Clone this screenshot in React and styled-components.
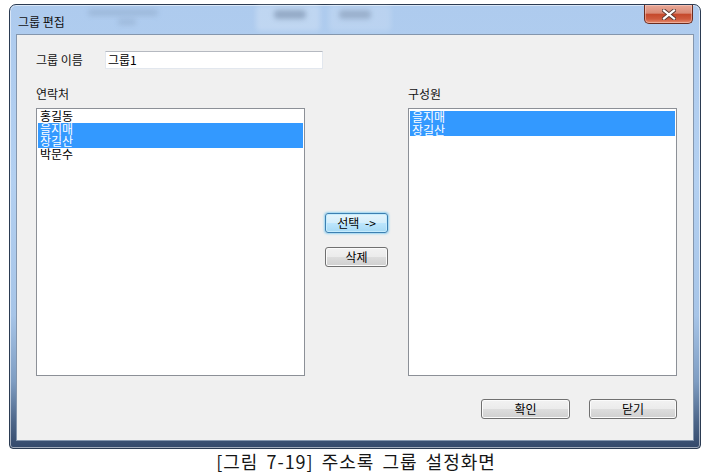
import React from "react";
import styled, { createGlobalStyle } from "styled-components";

const Global = createGlobalStyle`
  * { box-sizing: border-box; }
  html, body { margin: 0; padding: 0; background: #ffffff; }
  body { font-family: "Noto Sans CJK KR", "Noto Sans", sans-serif; }
`;

const Page = styled.div`
  width: 712px;
  height: 473px;
  background: #fff;
  display: flex;
  flex-direction: column;
  overflow: hidden;
`;

const Window = styled.div`
  margin: 4px 0 0 9px;
  width: 692px;
  height: 445px;
  border: 1px solid #2b3b52;
  border-radius: 7px 7px 4px 4px;
  background: linear-gradient(
    to bottom,
    #aecbee 0%,
    #b3d0f1 40%,
    #a7c5e8 70%,
    #7f9dc2 85%,
    #4d6689 94%,
    #34496a 100%
  );
  box-shadow: inset 0 0 0 1px rgba(255, 255, 255, 0.55);
  padding: 0 6px 7px;
  display: flex;
  flex-direction: column;
`;

const TitleBar = styled.div`
  position: relative;
  height: 29px;
  display: flex;
  justify-content: space-between;
  align-items: flex-start;
`;

const Blur = styled.span`
  position: absolute;
  border-radius: 4px;
  filter: blur(2.5px);
  background: ${(p) => p.$c || "rgba(60, 80, 110, 0.35)"};
  pointer-events: none;
`;

const TitleText = styled.div`
  position: relative;
  padding: 10px 0 0 2px;
  font-size: 12px;
  line-height: 14px;
  color: #111;
`;

const CloseBtn = styled.div`
  position: relative;
  margin-right: 1px;
  width: 49px;
  height: 19px;
  border: 1px solid #6b2c1f;
  border-top: none;
  border-radius: 0 0 5px 5px;
  background: linear-gradient(
    to bottom,
    #e9a897 0%,
    #d98a76 45%,
    #c5492c 52%,
    #cf5a3d 78%,
    #e58d70 100%
  );
  box-shadow: inset 0 0 0 1px rgba(255, 220, 210, 0.45);
  display: flex;
  align-items: center;
  justify-content: center;
`;

const Client = styled.div`
  flex: 1;
  background: #f0f0f0;
  border: 1px solid #8496ad;
  padding: 16px 16px 0 19px;
  display: flex;
  flex-direction: column;
`;

const NameRow = styled.div`
  display: flex;
  align-items: center;
  height: 18px;
`;

const Label = styled.div`
  font-size: 12px;
  line-height: 14px;
  color: #111;
  width: ${(p) => p.$w || "auto"};
  flex: none;
`;

const TextBox = styled.div`
  width: 218px;
  height: 18px;
  background: #fff;
  border: 1px solid #e2e7ee;
  border-top-color: #b5b9c0;
  font-size: 12px;
  line-height: 16px;
  padding-left: 2px;
  color: #000;
`;

const Lists = styled.div`
  margin-top: 18px;
  display: grid;
  grid-template-columns: 269px 63px 269px;
  column-gap: 20px;
  grid-template-rows: 14px 268px;
  row-gap: 7px;
`;

const ListBox = styled.div`
  background: #fff;
  border: 1px solid #8c9097;
  padding: ${(p) => p.$pt || 1}px 1px 0;
`;

const Item = styled.div`
  font-size: 12px;
  line-height: 12.5px;
  height: 12.5px;
  padding-left: 2px;
  white-space: nowrap;
  color: ${(p) => (p.$sel ? "#fff" : "#000")};
  background: ${(p) => (p.$sel ? "#3399ff" : "transparent")};
`;

const Middle = styled.div`
  padding-top: 105px;
  display: flex;
  flex-direction: column;
  gap: 14px;
`;

const Button = styled.div`
  width: ${(p) => p.$w || 63}px;
  height: 20px;
  border-radius: 3px;
  border: 1px solid ${(p) => (p.$focus ? "#3c7fb1" : "#707070")};
  background: ${(p) =>
    p.$focus
      ? "linear-gradient(to bottom, #e5f4fc 0%, #d4eefb 50%, #bde6fd 51%, #a6d9f4 100%)"
      : "linear-gradient(to bottom, #f2f2f2 0%, #ebebeb 50%, #dddddd 51%, #cfcfcf 100%)"};
  box-shadow: ${(p) =>
    p.$focus
      ? "inset 0 0 0 1px #c6ecfd, 0 0 2px 1px rgba(90, 190, 240, 0.6)"
      : "inset 0 0 0 1px #fbfbfb"};
  font-size: 12px;
  line-height: 18px;
  text-align: center;
  color: #000;
  word-spacing: ${(p) => p.$ws || 0}px;
`;

const Footer = styled.div`
  margin-top: 23px;
  display: flex;
  justify-content: flex-end;
  gap: 19px;
`;

const Caption = styled.div`
  height: 24px;
  text-align: center;
  font-size: 18px;
  line-height: 24px;
  letter-spacing: 1px;
  color: #161616;
  word-spacing: 3px;
`;

const CloseIcon = () => (
  <svg width="14" height="11" viewBox="0 0 14 11">
    <path
      d="M2 1.5 L12 9.5 M12 1.5 L2 9.5"
      stroke="#5a3a34"
      strokeWidth="4"
      strokeLinecap="square"
    />
    <path
      d="M2 1.5 L12 9.5 M12 1.5 L2 9.5"
      stroke="#ffffff"
      strokeWidth="2.2"
      strokeLinecap="square"
    />
  </svg>
);

const contacts = [
  { name: "홍길동", sel: false },
  { name: "을지매", sel: true },
  { name: "장길산", sel: true },
  { name: "박문수", sel: false },
];

const members = [
  { name: "을지매", sel: true },
  { name: "장길산", sel: true },
];

export default function App() {
  return (
    <Page>
      <Global />
      <Window>
        <TitleBar>
          <Blur style={{ left: 72, top: 4, width: 70, height: 7 }} $c="rgba(90,110,140,0.18)" />
          <Blur style={{ left: 102, top: 14, width: 18, height: 6 }} $c="rgba(90,110,140,0.18)" />
          <Blur style={{ left: 240, top: 0, width: 64, height: 26 }} $c="rgba(255,255,255,0.22)" />
          <Blur style={{ left: 258, top: 5, width: 32, height: 9 }} $c="rgba(70,90,120,0.35)" />
          <Blur style={{ left: 323, top: 5, width: 32, height: 9 }} $c="rgba(70,90,120,0.35)" />
          <Blur style={{ left: 313, top: 0, width: 62, height: 26 }} $c="rgba(255,255,255,0.15)" />
          <TitleText>그룹 편집</TitleText>
          <CloseBtn>
            <CloseIcon />
          </CloseBtn>
        </TitleBar>
        <Client>
          <NameRow>
            <Label $w="69px">그룹 이름</Label>
            <TextBox>그룹1</TextBox>
          </NameRow>
          <Lists>
            <Label>연락처</Label>
            <div />
            <Label>구성원</Label>
            <ListBox $pt={1}>
              {contacts.map((c) => (
                <Item key={c.name} $sel={c.sel}>
                  {c.name}
                </Item>
              ))}
            </ListBox>
            <Middle>
              <Button $focus $ws={3}>선택 -&gt;</Button>
              <Button>삭제</Button>
            </Middle>
            <ListBox $pt={2}>
              {members.map((c) => (
                <Item key={c.name} $sel={c.sel}>
                  {c.name}
                </Item>
              ))}
            </ListBox>
          </Lists>
          <Footer>
            <Button $w={89}>확인</Button>
            <Button $w={88}>닫기</Button>
          </Footer>
        </Client>
      </Window>
      <Caption>[그림 7-19] 주소록 그룹 설정화면</Caption>
    </Page>
  );
}
